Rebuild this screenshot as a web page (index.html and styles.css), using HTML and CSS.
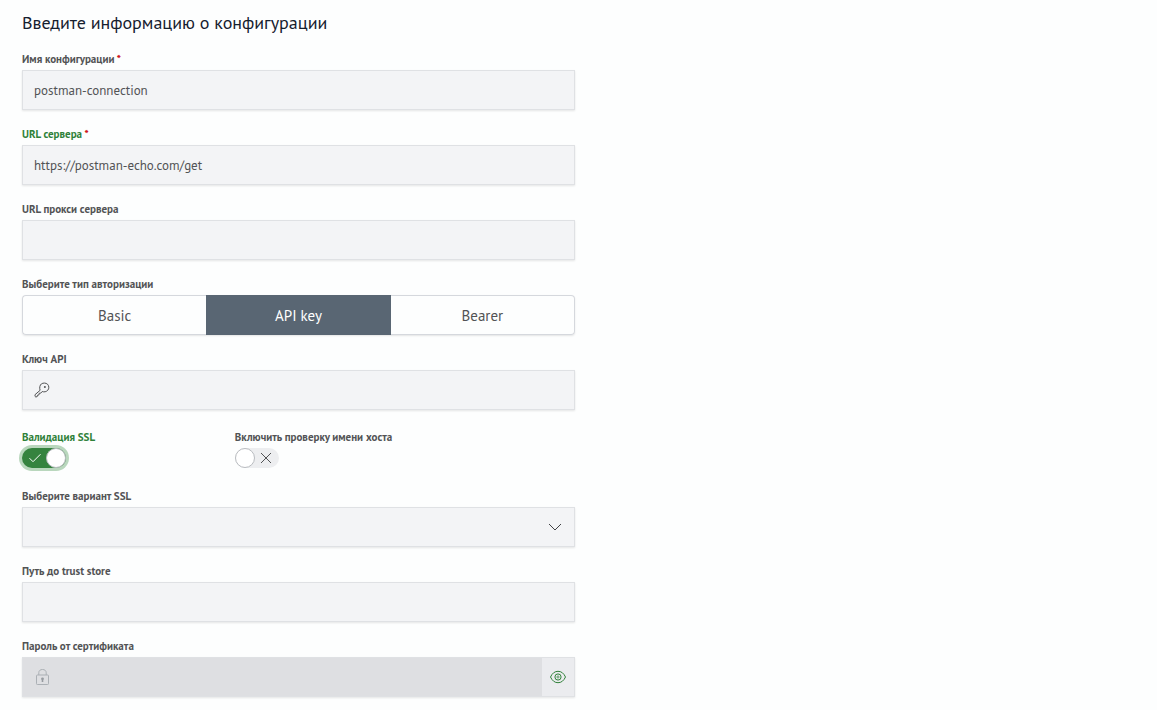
FILE: index.html
```html
<!DOCTYPE html>
<html lang="ru">
<head>
<meta charset="utf-8">
<meta name="viewport" content="width=device-width, initial-scale=1">
<title>Конфигурация</title>
<link rel="stylesheet" href="styles.css">
</head>
<body>
<main class="page">
  <form class="form">
    <h1 class="title">Введите информацию о конфигурации</h1>

    <div class="field">
      <label class="label" for="name">Имя конфигурации <span class="required">*</span></label>
      <input class="control" id="name" type="text" value="postman-connection" required>
    </div>

    <div class="field">
      <label class="label label-active" for="url">URL сервера <span class="required">*</span></label>
      <input class="control" id="url" type="text" value="https://postman-echo.com/get" required>
    </div>

    <div class="field">
      <label class="label" for="proxy">URL прокси сервера</label>
      <input class="control" id="proxy" type="text">
    </div>

    <div class="field" role="group" aria-labelledby="auth-label">
      <span class="label" id="auth-label">Выберите тип авторизации</span>
      <div class="segments">
        <button class="segment" type="button" aria-pressed="false">Basic</button>
        <button class="segment segment-selected" type="button" aria-pressed="true">API key</button>
        <button class="segment" type="button" aria-pressed="false">Bearer</button>
      </div>
    </div>

    <div class="field">
      <label class="label" for="key">Ключ API</label>
      <div class="control control-icon">
        <svg class="icon" viewBox="0 0 16 16" aria-hidden="true"><path d="M6.1 8.3C5.2 5.5 5.9 3.1 7.4 1.9C9.2.7 12 .8 13.5 2.2C15.2 3.9 15.2 6.6 13.8 8.2C12.3 9.9 10.1 10.2 8.2 9.5L6.8 11.1L5.2 11.3L5 12.9L3.5 13.2L3.2 14.6L1.8 15L1 14.3V12.7Z"/><circle class="icon-dot" cx="10.9" cy="4.9" r="1"/></svg>
        <input class="bare-input" id="key" type="text">
      </div>
    </div>

    <div class="switches">
      <div class="switch-field">
        <label class="label label-active" for="ssl">Валидация SSL</label>
        <span class="switch">
          <input class="switch-input switch-focused" id="ssl" type="checkbox" role="switch" checked>
          <svg class="switch-mark mark-on" viewBox="0 0 12 12" aria-hidden="true"><path d="M.5 6.2 4 9.7 11.5 2.2"/></svg>
        </span>
      </div>
      <div class="switch-field">
        <label class="label" for="host">Включить проверку имени хоста</label>
        <span class="switch">
          <input class="switch-input" id="host" type="checkbox" role="switch">
          <svg class="switch-mark mark-off" viewBox="0 0 12 12" aria-hidden="true"><path d="m1 1 10 10M11 1 1 11"/></svg>
        </span>
      </div>
    </div>

    <div class="field">
      <label class="label" for="variant">Выберите вариант SSL</label>
      <div class="select">
        <select class="control" id="variant"><option value=""></option></select>
        <svg class="select-arrow" viewBox="0 0 14 8" aria-hidden="true"><path d="m1 1 6 6 6-6"/></svg>
      </div>
    </div>

    <div class="field">
      <label class="label" for="store">Путь до trust store</label>
      <input class="control" id="store" type="text">
    </div>

    <div class="field">
      <label class="label" for="password">Пароль от сертификата</label>
      <div class="control control-icon control-disabled">
        <svg class="icon icon-muted" viewBox="0 0 16 16" aria-hidden="true"><rect x="2.5" y="6" width="12" height="9.5" rx=".8"/><path d="M4.8 6V3.7C4.8 1.6 6.3.5 8.5.5S12.2 1.6 12.2 3.7V6"/><path class="lock-hole" d="M7.1 9.8a1.4 1.4 0 1 1 2.8 0a1.4 1.4 0 0 1-.6 1.1V13H7.7v-2.1a1.4 1.4 0 0 1-.6-1.1Z"/></svg>
        <input class="bare-input" id="password" type="password" disabled>
        <button class="reveal" type="button" aria-label="Показать пароль">
          <svg class="icon icon-green" viewBox="0 0 16 16" aria-hidden="true"><path d="M.5 8C2.3 4.2 4.7 2.3 8 2.3S13.7 4.2 15.5 8C13.7 11.8 11.3 13.7 8 13.7S2.3 11.8.5 8Z"/><circle cx="8" cy="8" r="3.1"/><circle class="pupil" cx="8" cy="8" r="1.1"/></svg>
        </button>
      </div>
    </div>
  </form>
</main>
</body>
</html>
```
FILE: styles.css
```css
*,
*::before {
  box-sizing: border-box;
}

body {
  margin: 0;
  background: #fdfefe;
  color: #525355;
  font-family: "PT Sans", "Noto Sans", sans-serif;
}

button,
input,
select {
  font: inherit;
  color: inherit;
}

.page {
  display: grid;
  grid-template-columns: 1fr 1fr;
  column-gap: 7px;
  padding: 10px 22px 13px;
}

.form {
  display: flex;
  flex-direction: column;
  gap: 16px;
}

.title {
  margin: 0;
  color: #15202e;
  font-size: 18px;
  font-weight: 400;
  line-height: 25px;
}

.field {
  display: flex;
  flex-direction: column;
}

.label {
  font-size: 11px;
  font-weight: 700;
  line-height: 16px;
  padding-bottom: 3px;
  white-space: nowrap;
}

.label-active {
  color: #2f8139;
}

.required {
  color: #d0161b;
}

.control {
  width: 100%;
  height: 40px;
  padding: 0 11px;
  border: 1px solid #dfe1e4;
  border-radius: 0;
  background: #f3f4f6;
  box-shadow: 0 1px 2px #0000001a;
  font-size: 13px;
}

.control-icon {
  display: flex;
  align-items: center;
  gap: 8px;
}

.bare-input {
  flex: 1;
  min-width: 0;
  height: 100%;
  padding: 0;
  border: 0;
  background: transparent;
}

.control-disabled {
  padding-right: 0;
  background: #dedfe2;
}

.icon {
  flex: none;
  width: 16px;
  height: 16px;
  fill: none;
  stroke: #525355;
}

.icon-muted {
  stroke: #abb0b5;
}

.icon-green {
  stroke: #2f8139;
}

.icon-dot {
  fill: #525355;
  stroke: none;
}

.pupil {
  stroke-width: .7;
}

.lock-hole {
  fill: #969ba0;
  stroke: none;
}

.reveal {
  display: grid;
  place-items: center;
  width: 32px;
  height: 100%;
  padding: 0;
  border: 0;
  background: #ebecef;
}

.segments {
  display: grid;
  grid-template-columns: 1fr 1fr 1fr;
  height: 40px;
  border-radius: 4px;
  box-shadow: 0 1px 2px #0000001a;
}

.segment {
  padding: 0;
  border: 1px solid #d5d8dd;
  background: #fdfefe;
  font-size: 15px;
}

.segment:first-child {
  border-right: 0;
  border-radius: 4px 0 0 4px;
}

.segment:last-child {
  border-left: 0;
  border-radius: 0 4px 4px 0;
}

.segment-selected {
  border-color: #596673;
  background: #596673;
  color: #fff;
}

.switches {
  display: grid;
  grid-template-columns: 5fr 8fr;
  padding: 3px 0 4px;
}

.switch-field {
  display: flex;
  flex-direction: column;
  align-items: flex-start;
}

.switch {
  position: relative;
  display: flex;
  width: 44px;
  height: 20px;
}

.switch-input {
  display: flex;
  appearance: none;
  width: 100%;
  height: 100%;
  margin: 0;
  border-radius: 10px;
  background: #edeef0;
}

.switch-input::before {
  content: "";
  width: 20px;
  height: 20px;
  border: 1px solid #b9bcc0;
  border-radius: 50%;
  background: #fff;
}

.switch-input:checked {
  justify-content: flex-end;
  background: #35833f;
}

.switch-focused {
  box-shadow: 0 0 0 3px #b9d7bd;
}

.switch-mark {
  position: absolute;
  top: 4px;
  width: 12px;
  height: 12px;
  fill: none;
  pointer-events: none;
}

.mark-on {
  left: 7px;
  stroke: #fff;
}

.mark-off {
  right: 7px;
  stroke: #525355;
}

.select {
  position: relative;
}

.select .control {
  display: block;
  appearance: none;
}

.select-arrow {
  position: absolute;
  top: 16px;
  right: 13px;
  width: 14px;
  height: 8px;
  fill: none;
  stroke: #414245;
  pointer-events: none;
}
```
